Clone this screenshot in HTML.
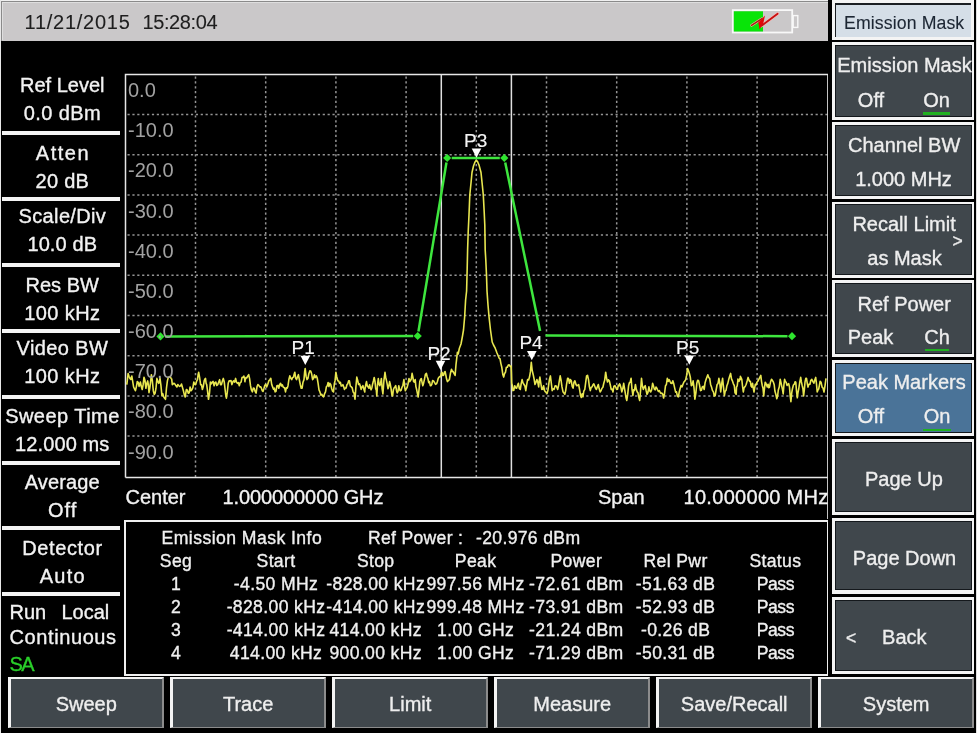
<!DOCTYPE html>
<html><head><meta charset="utf-8"><style>
html,body{margin:0;padding:0;}
html{background:#000;}
body{width:977px;height:733px;background:#000;position:relative;overflow:hidden;filter:blur(0.3px);font-family:"Liberation Sans", sans-serif;}
.t{position:absolute;white-space:pre;-webkit-text-stroke:0.35px currentColor;font-family:"Liberation Sans", sans-serif;}
</style></head><body>
<div style="position:absolute;left:0px;top:0px;width:977px;height:1px;background:#f0f0f0;"></div>
<div style="position:absolute;left:0px;top:0px;width:1px;height:733px;background:#e8e8e8;"></div>
<div style="position:absolute;left:1px;top:1px;width:827px;height:39.6px;background:#cac8c9;border-top:1px solid #8a8a8a;border-left:1px solid #8a8a8a;box-sizing:border-box;"></div>
<div style="position:absolute;left:2px;top:2px;width:826px;height:1px;background:#dedede;"></div>
<div style="position:absolute;left:2px;top:2px;width:1px;height:38px;background:#dedede;"></div>
<div class="t" style="left:24.50px;top:11.97px;font-size:20px;line-height:20px;color:#1e1e1e;letter-spacing:0.75px;-webkit-text-stroke:0.1px currentColor;">11/21/2015</div>
<div class="t" style="left:142.50px;top:11.97px;font-size:20px;line-height:20px;color:#1e1e1e;letter-spacing:-0.4px;-webkit-text-stroke:0.1px currentColor;">15:28:04</div>
<svg style="position:absolute;left:0;top:0" width="977" height="733" viewBox="0 0 977 733">
<rect x="732.8" y="10.1" width="59.4" height="22.4" fill="#cac8c9" stroke="#f8f8f8" stroke-width="1.8"/>
<rect x="733.8" y="11.3" width="29.2" height="20.2" fill="#08e408"/>
<rect x="793.2" y="15.6" width="4.6" height="11.8" fill="#cac8c9" stroke="#f8f8f8" stroke-width="1.4"/>
<path d="M751.5 25.3 L762 18.6" stroke="#e8b0a8" stroke-width="2.6" stroke-linecap="round"/>
<path d="M761.5 25.8 L777.6 13.8" stroke="#f4b8b8" stroke-width="3.2" stroke-linecap="round"/>
<path d="M751.5 25.3 L762 18.6" stroke="#a82010" stroke-width="1.4" stroke-linecap="round"/>
<polygon points="765,15.6 763.3,23.6 759.5,29.2 758.3,22.6" fill="#e00808"/>
<path d="M761.5 25.8 L777.6 13.8" stroke="#c81010" stroke-width="1.8" stroke-linecap="round"/>
</svg>
<div style="position:absolute;left:2px;top:130.8px;width:118.4px;height:3.9px;background:#f4f4f4;"></div>
<div style="position:absolute;left:2px;top:196.8px;width:118.4px;height:3.9px;background:#f4f4f4;"></div>
<div style="position:absolute;left:2px;top:262.8px;width:118.4px;height:3.9px;background:#f4f4f4;"></div>
<div style="position:absolute;left:2px;top:328.8px;width:118.4px;height:3.9px;background:#f4f4f4;"></div>
<div style="position:absolute;left:2px;top:394.8px;width:118.4px;height:3.9px;background:#f4f4f4;"></div>
<div style="position:absolute;left:2px;top:460.8px;width:118.4px;height:3.9px;background:#f4f4f4;"></div>
<div style="position:absolute;left:2px;top:526.0px;width:118.4px;height:3.9px;background:#f4f4f4;"></div>
<div style="position:absolute;left:2px;top:592.0px;width:118.4px;height:3.9px;background:#f4f4f4;"></div>
<div class="t" style="left:-87.80px;width:300px;text-align:center;top:75.07px;font-size:20px;line-height:20px;color:#f2f2f2;letter-spacing:0px;">Ref Level</div>
<div class="t" style="left:-87.60px;width:300px;text-align:center;top:103.27px;font-size:20px;line-height:20px;color:#f2f2f2;letter-spacing:0.4px;">0.0 dBm</div>
<div class="t" style="left:-87.05px;width:300px;text-align:center;top:143.17px;font-size:20px;line-height:20px;color:#f2f2f2;letter-spacing:1.5px;">Atten</div>
<div class="t" style="left:-87.65px;width:300px;text-align:center;top:171.47px;font-size:20px;line-height:20px;color:#f2f2f2;letter-spacing:0.3px;">20 dB</div>
<div class="t" style="left:-87.62px;width:300px;text-align:center;top:206.17px;font-size:20px;line-height:20px;color:#f2f2f2;letter-spacing:0.35px;">Scale/Div</div>
<div class="t" style="left:-87.75px;width:300px;text-align:center;top:234.47px;font-size:20px;line-height:20px;color:#f2f2f2;letter-spacing:0.1px;">10.0 dB</div>
<div class="t" style="left:-87.80px;width:300px;text-align:center;top:274.87px;font-size:20px;line-height:20px;color:#f2f2f2;letter-spacing:0px;">Res BW</div>
<div class="t" style="left:-87.60px;width:300px;text-align:center;top:302.87px;font-size:20px;line-height:20px;color:#f2f2f2;letter-spacing:0.4px;">100 kHz</div>
<div class="t" style="left:-87.60px;width:300px;text-align:center;top:337.87px;font-size:20px;line-height:20px;color:#f2f2f2;letter-spacing:0.4px;">Video BW</div>
<div class="t" style="left:-87.60px;width:300px;text-align:center;top:366.27px;font-size:20px;line-height:20px;color:#f2f2f2;letter-spacing:0.4px;">100 kHz</div>
<div class="t" style="left:-87.57px;width:300px;text-align:center;top:406.07px;font-size:20px;line-height:20px;color:#f2f2f2;letter-spacing:0.45px;">Sweep Time</div>
<div class="t" style="left:-87.75px;width:300px;text-align:center;top:433.67px;font-size:20px;line-height:20px;color:#f2f2f2;letter-spacing:0.1px;">12.000 ms</div>
<div class="t" style="left:-87.72px;width:300px;text-align:center;top:472.27px;font-size:20px;line-height:20px;color:#f2f2f2;letter-spacing:0.15px;">Average</div>
<div class="t" style="left:-87.30px;width:300px;text-align:center;top:499.87px;font-size:20px;line-height:20px;color:#f2f2f2;letter-spacing:1.0px;">Off</div>
<div class="t" style="left:-87.50px;width:300px;text-align:center;top:538.07px;font-size:20px;line-height:20px;color:#f2f2f2;letter-spacing:0.6px;">Detector</div>
<div class="t" style="left:-87.20px;width:300px;text-align:center;top:565.77px;font-size:20px;line-height:20px;color:#f2f2f2;letter-spacing:1.2px;">Auto</div>
<div class="t" style="left:9.50px;top:601.67px;font-size:20px;line-height:20px;color:#f2f2f2;">Run</div>
<div class="t" style="left:61.50px;top:601.67px;font-size:20px;line-height:20px;color:#f2f2f2;">Local</div>
<div class="t" style="left:9.50px;top:626.67px;font-size:20px;line-height:20px;color:#f2f2f2;letter-spacing:0.6px;">Continuous</div>
<div class="t" style="left:9.50px;top:653.87px;font-size:20px;line-height:20px;color:#2ad02a;letter-spacing:-1.5px;">SA</div>
<svg style="position:absolute;left:0;top:0" width="977" height="733" viewBox="0 0 977 733">
<line x1="195.50" y1="76.5" x2="195.50" y2="477.5" stroke="#949494" stroke-width="1.5" stroke-dasharray="2.2 2.66"/>
<line x1="265.70" y1="76.5" x2="265.70" y2="477.5" stroke="#949494" stroke-width="1.5" stroke-dasharray="2.2 2.66"/>
<line x1="335.90" y1="76.5" x2="335.90" y2="477.5" stroke="#949494" stroke-width="1.5" stroke-dasharray="2.2 2.66"/>
<line x1="406.10" y1="76.5" x2="406.10" y2="477.5" stroke="#949494" stroke-width="1.5" stroke-dasharray="2.2 2.66"/>
<line x1="476.30" y1="76.5" x2="476.30" y2="477.5" stroke="#949494" stroke-width="1.5" stroke-dasharray="2.2 2.66"/>
<line x1="546.50" y1="76.5" x2="546.50" y2="477.5" stroke="#949494" stroke-width="1.5" stroke-dasharray="2.2 2.66"/>
<line x1="616.70" y1="76.5" x2="616.70" y2="477.5" stroke="#949494" stroke-width="1.5" stroke-dasharray="2.2 2.66"/>
<line x1="686.90" y1="76.5" x2="686.90" y2="477.5" stroke="#949494" stroke-width="1.5" stroke-dasharray="2.2 2.66"/>
<line x1="757.10" y1="76.5" x2="757.10" y2="477.5" stroke="#949494" stroke-width="1.5" stroke-dasharray="2.2 2.66"/>
<line x1="127.5" y1="114.50" x2="827.9" y2="114.50" stroke="#949494" stroke-width="1.5" stroke-dasharray="2.2 2.68"/>
<line x1="127.5" y1="154.70" x2="827.9" y2="154.70" stroke="#949494" stroke-width="1.5" stroke-dasharray="2.2 2.68"/>
<line x1="127.5" y1="194.90" x2="827.9" y2="194.90" stroke="#949494" stroke-width="1.5" stroke-dasharray="2.2 2.68"/>
<line x1="127.5" y1="235.10" x2="827.9" y2="235.10" stroke="#949494" stroke-width="1.5" stroke-dasharray="2.2 2.68"/>
<line x1="127.5" y1="275.30" x2="827.9" y2="275.30" stroke="#949494" stroke-width="1.5" stroke-dasharray="2.2 2.68"/>
<line x1="127.5" y1="315.50" x2="827.9" y2="315.50" stroke="#949494" stroke-width="1.5" stroke-dasharray="2.2 2.68"/>
<line x1="127.5" y1="355.70" x2="827.9" y2="355.70" stroke="#949494" stroke-width="1.5" stroke-dasharray="2.2 2.68"/>
<line x1="127.5" y1="395.90" x2="827.9" y2="395.90" stroke="#949494" stroke-width="1.5" stroke-dasharray="2.2 2.68"/>
<line x1="127.5" y1="436.10" x2="827.9" y2="436.10" stroke="#949494" stroke-width="1.5" stroke-dasharray="2.2 2.68"/>
<path d="M125.5 477.5 L125.5 74.5 L827.9 74.5 L827.9 519" fill="none" stroke="#e6e6e6" stroke-width="1.5"/>
<line x1="125.5" y1="477.5" x2="827.9" y2="477.5" stroke="#e6e6e6" stroke-width="1.5"/>
<line x1="441.3" y1="74.5" x2="441.3" y2="477.5" stroke="#e0e0e0" stroke-width="1.5"/>
<line x1="511.4" y1="74.5" x2="511.4" y2="477.5" stroke="#e0e0e0" stroke-width="1.5"/>
<path d="M126.8 384.6 L127.5 378.8 L128.1 373.5 L129.0 376.3 L129.9 378.4 L130.8 379.4 L131.8 376.0 L132.7 381.3 L133.6 387.0 L134.5 388.9 L135.4 390.7 L136.4 386.6 L137.3 381.5 L138.2 382.3 L139.1 386.4 L139.7 384.3 L140.4 382.1 L141.3 386.5 L142.2 389.5 L143.1 384.9 L144.0 377.2 L145.0 380.6 L145.9 388.3 L146.8 383.5 L147.7 380.9 L148.3 384.6 L149.0 392.6 L149.8 388.2 L150.6 381.7 L151.4 374.7 L152.3 380.3 L153.3 390.7 L154.2 394.4 L155.1 393.2 L156.0 388.2 L156.9 378.4 L157.9 381.7 L158.8 383.3 L159.4 381.5 L160.0 378.4 L160.9 385.2 L161.9 395.6 L162.8 393.7 L163.7 396.9 L164.6 398.2 L165.5 399.3 L166.5 387.8 L167.4 380.9 L168.3 377.4 L169.2 377.2 L170.1 376.5 L171.1 378.4 L171.7 379.1 L172.3 384.6 L173.2 383.8 L174.1 383.3 L175.1 384.3 L176.0 385.8 L176.9 387.0 L177.8 384.6 L178.7 385.6 L179.7 386.4 L180.6 385.9 L181.5 384.0 L182.4 387.3 L183.4 390.7 L184.3 394.6 L185.2 396.9 L185.8 392.9 L186.4 389.5 L187.3 390.2 L188.3 393.2 L189.2 392.7 L190.1 387.0 L191.0 390.8 L192.0 389.5 L192.9 387.6 L193.8 382.1 L194.7 384.4 L195.6 384.6 L196.6 381.2 L197.5 379.7 L198.1 374.6 L198.7 372.3 L199.6 377.3 L200.6 384.6 L201.5 384.8 L202.4 389.5 L203.3 386.6 L204.2 380.9 L204.9 379.1 L205.5 378.4 L206.1 383.3 L206.7 384.6 L207.6 391.4 L208.5 399.3 L209.5 393.1 L210.4 382.1 L211.3 383.9 L212.2 382.1 L213.1 381.4 L214.1 385.8 L215.0 382.4 L215.9 382.1 L216.8 385.5 L217.8 384.6 L218.7 382.0 L219.6 379.7 L220.5 384.6 L221.4 384.6 L222.4 381.0 L223.3 378.4 L224.2 381.7 L225.1 389.5 L225.7 394.5 L226.4 398.1 L227.3 392.2 L228.2 383.3 L229.1 380.9 L230.0 380.9 L231.0 380.6 L231.9 384.6 L232.8 381.9 L233.7 380.9 L234.6 382.1 L235.6 378.4 L236.5 382.2 L237.4 383.3 L238.3 382.6 L239.3 385.8 L240.2 382.6 L241.1 382.1 L242.0 377.6 L242.9 377.2 L243.9 376.1 L244.8 379.7 L244.9 381.8 L245.0 380.8 L245.9 377.6 L246.8 378.0 L247.8 375.9 L248.7 374.7 L249.6 378.6 L250.5 385.7 L251.4 390.0 L252.4 391.9 L253.3 388.1 L254.2 388.2 L255.1 391.4 L256.1 393.1 L257.0 386.8 L257.9 384.5 L258.8 385.3 L259.7 386.9 L260.6 386.7 L261.4 388.2 L262.2 390.6 L263.0 391.4 L263.8 388.9 L264.7 385.7 L265.7 384.3 L266.7 386.9 L267.7 384.5 L268.8 380.9 L269.8 379.8 L270.8 378.3 L271.7 384.5 L272.6 386.9 L273.5 389.3 L274.3 388.1 L275.1 391.9 L276.0 391.3 L276.9 385.7 L277.9 385.4 L278.8 388.2 L279.7 384.5 L280.6 383.3 L281.4 385.9 L282.3 384.8 L283.1 386.9 L283.9 387.5 L284.7 388.0 L285.5 391.9 L286.4 387.7 L287.2 388.2 L288.0 385.7 L288.9 379.5 L289.8 375.9 L290.8 378.3 L291.7 379.6 L292.6 377.7 L293.5 377.1 L294.1 374.4 L294.8 372.2 L295.7 378.3 L296.6 379.6 L297.5 377.0 L298.4 374.7 L299.4 380.0 L300.3 384.5 L301.2 388.2 L302.1 388.2 L303.0 382.2 L304.0 379.6 L304.6 372.2 L305.2 368.5 L306.1 376.2 L307.0 379.6 L308.0 378.2 L308.9 373.4 L309.8 370.9 L310.7 371.0 L311.6 373.7 L312.6 379.6 L313.5 378.4 L314.4 374.7 L315.3 377.6 L316.3 375.9 L317.2 378.0 L318.1 383.3 L319.0 389.9 L319.9 391.9 L320.9 395.1 L321.8 394.3 L322.7 396.1 L323.6 396.8 L324.5 393.9 L325.5 391.9 L326.4 386.7 L327.3 385.7 L328.1 382.5 L328.9 386.5 L329.8 383.3 L330.7 384.4 L331.6 388.2 L332.5 391.1 L333.5 391.9 L334.3 384.0 L335.1 380.4 L335.9 372.2 L336.8 377.0 L337.8 380.8 L338.7 381.0 L339.6 383.3 L340.4 382.4 L341.2 386.0 L342.1 385.7 L342.9 384.7 L343.7 386.8 L344.5 389.4 L345.3 388.1 L346.1 388.0 L347.0 384.5 L347.8 383.8 L348.6 380.9 L349.4 380.8 L350.3 386.0 L351.3 386.9 L352.2 387.9 L353.1 391.9 L354.0 393.0 L355.0 399.2 L355.9 387.0 L356.8 377.1 L357.7 380.5 L358.6 384.5 L359.5 383.8 L360.3 386.1 L361.1 389.4 L362.0 386.9 L362.9 385.7 L363.9 389.2 L364.8 391.9 L364.9 388.4 L365.0 388.8 L365.8 384.5 L366.5 381.6 L367.3 386.2 L368.1 386.7 L368.8 388.2 L369.6 384.7 L370.4 388.1 L371.1 389.8 L371.9 387.7 L372.7 383.7 L373.4 381.0 L374.2 377.5 L375.0 381.3 L375.7 388.8 L376.3 389.9 L376.8 395.9 L377.5 384.7 L378.3 378.5 L379.1 384.3 L379.8 385.7 L380.6 383.2 L381.4 378.5 L382.1 388.6 L382.9 393.9 L383.9 380.7 L385.0 372.4 L385.7 377.2 L386.5 380.6 L387.3 384.6 L388.0 388.8 L388.8 386.4 L389.6 381.6 L390.3 384.3 L391.1 388.8 L391.9 395.0 L392.6 395.9 L393.4 389.6 L394.2 387.8 L394.9 387.0 L395.7 385.7 L396.5 390.5 L397.2 392.9 L398.0 391.4 L398.8 385.7 L399.5 389.5 L400.3 390.8 L401.1 390.3 L401.8 387.8 L402.9 385.2 L403.9 379.6 L404.7 387.4 L405.4 390.8 L406.2 388.5 L407.0 387.8 L408.0 384.1 L409.0 378.5 L409.8 381.6 L410.5 380.6 L411.3 378.9 L412.1 373.4 L412.9 377.1 L413.6 381.6 L414.4 382.1 L415.2 379.6 L415.9 386.6 L416.7 389.8 L417.5 393.8 L418.2 397.0 L419.0 389.9 L419.8 381.6 L420.5 379.5 L421.3 378.5 L422.1 382.6 L422.8 385.7 L423.6 383.2 L424.4 379.6 L425.4 374.3 L426.4 373.4 L427.2 376.7 L427.9 378.5 L428.7 382.6 L429.5 381.6 L430.3 385.6 L431.0 385.7 L431.8 384.3 L432.6 380.6 L433.6 381.0 L434.6 382.6 L435.6 384.4 L436.6 383.7 L437.4 381.5 L438.2 378.5 L439.0 377.2 L439.7 376.5 L440.5 376.7 L441.3 373.4 L442.0 372.3 L442.8 375.5 L443.6 375.2 L444.3 372.4 L445.1 371.5 L445.9 375.5 L446.6 379.1 L447.4 381.6 L448.4 380.5 L449.4 379.6 L450.5 373.0 L451.5 369.3 L452.3 371.4 L453.0 371.4 L454.0 373.4 L455.1 375.5 L456.0 364.6 L457.4 352.3 L458.2 354.0 L459.4 348.2 L461.0 344.0 L462.5 336.0 L463.5 330.0 L464.6 317.5 L465.6 300.0 L466.6 291.0 L467.2 268.0 L467.6 250.0 L468.2 232.0 L469.0 215.0 L469.8 195.0 L471.0 183.0 L472.0 172.5 L473.5 166.0 L475.0 162.0 L476.2 160.5 L477.5 161.5 L479.0 165.0 L481.0 172.5 L482.3 185.0 L483.3 195.0 L484.2 212.0 L484.8 225.0 L485.2 250.0 L485.8 260.0 L486.5 275.0 L487.0 291.0 L488.0 305.0 L489.1 317.5 L490.5 330.0 L492.2 342.0 L493.5 345.0 L495.2 348.2 L497.0 353.0 L499.3 358.5 L500.0 358.7 L500.9 363.6 L501.8 367.3 L502.8 374.4 L503.7 377.1 L504.6 373.4 L505.5 372.2 L506.4 367.2 L507.4 367.3 L508.3 365.0 L509.2 364.8 L510.1 366.4 L511.1 366.1 L511.4 373.1 L511.7 383.3 L512.3 385.2 L512.9 390.6 L513.8 390.3 L514.7 385.7 L515.7 387.8 L516.6 388.2 L517.5 385.4 L518.4 383.3 L519.3 388.4 L520.3 389.4 L521.2 383.6 L522.1 379.6 L523.0 382.9 L524.0 384.5 L524.9 386.0 L525.8 390.6 L526.7 384.7 L527.6 379.6 L528.6 379.9 L529.5 377.1 L530.4 371.9 L531.3 362.4 L532.2 370.5 L533.2 374.7 L534.1 379.0 L535.0 384.5 L535.9 382.5 L536.9 379.6 L537.8 382.3 L538.7 386.9 L539.3 380.1 L539.9 377.1 L540.8 383.2 L541.8 389.4 L542.7 389.3 L543.6 385.7 L544.5 390.6 L545.5 391.9 L546.3 392.5 L547.1 393.4 L547.9 390.6 L548.7 384.6 L549.5 379.1 L550.4 375.9 L551.3 383.0 L552.2 390.6 L553.1 388.8 L554.1 389.4 L555.0 386.1 L555.9 385.7 L556.8 387.1 L557.7 389.4 L558.6 385.5 L559.4 380.4 L560.2 375.9 L561.1 380.5 L562.0 386.9 L563.0 391.8 L563.9 393.1 L564.8 394.4 L565.7 390.6 L566.6 384.2 L567.6 378.3 L568.5 378.6 L569.4 383.3 L570.3 379.6 L571.3 380.8 L572.2 386.4 L573.1 388.2 L574.0 382.1 L574.9 380.8 L575.9 384.3 L576.8 385.7 L577.7 385.5 L578.6 384.5 L579.5 389.0 L580.5 395.5 L581.3 397.5 L582.1 393.9 L582.9 396.8 L583.8 391.2 L584.8 389.4 L585.7 382.4 L586.6 375.9 L587.5 375.3 L588.5 379.6 L589.4 386.8 L590.3 390.6 L591.2 387.4 L592.1 386.9 L593.0 384.7 L593.8 383.8 L594.6 385.7 L595.5 388.2 L596.4 389.4 L597.4 386.7 L598.3 384.5 L599.2 388.8 L600.1 391.9 L601.0 390.8 L602.0 388.2 L602.9 387.3 L603.8 383.3 L604.7 380.1 L605.7 372.2 L606.6 378.1 L607.5 382.0 L608.4 379.8 L609.3 380.8 L610.3 385.0 L611.2 389.4 L612.1 389.0 L613.0 391.9 L613.9 386.2 L614.9 385.7 L615.8 387.4 L616.7 389.4 L617.5 389.3 L618.3 385.3 L619.2 385.7 L619.6 383.9 L620.0 384.5 L620.9 387.4 L621.8 391.9 L622.8 388.6 L623.7 383.3 L624.6 388.9 L625.5 394.3 L626.1 398.0 L626.8 400.5 L627.7 394.4 L628.6 385.7 L629.4 382.7 L630.2 382.3 L631.1 378.3 L632.0 389.1 L632.9 395.5 L633.7 389.7 L634.5 390.4 L635.4 384.5 L636.3 389.3 L637.2 391.9 L638.0 392.8 L638.8 397.3 L639.7 400.5 L640.6 390.1 L641.5 378.3 L642.4 386.0 L643.3 389.4 L644.3 386.9 L645.2 385.7 L646.1 390.4 L647.0 394.3 L647.9 392.6 L648.9 386.9 L649.8 390.9 L650.7 391.9 L651.6 389.9 L652.6 383.3 L653.5 386.1 L654.4 389.4 L655.2 389.8 L656.0 387.0 L656.9 388.2 L657.7 390.1 L658.5 391.5 L659.3 390.6 L660.1 392.2 L661.0 393.4 L661.8 393.1 L662.7 394.0 L663.6 398.0 L664.5 393.9 L665.5 385.7 L666.4 384.5 L667.3 378.3 L668.2 381.4 L669.1 379.6 L670.1 381.6 L671.0 383.3 L671.9 383.5 L672.8 380.8 L673.7 383.6 L674.7 388.2 L675.6 392.1 L676.5 391.9 L677.4 396.2 L678.4 396.8 L679.3 391.7 L680.2 388.2 L681.1 385.4 L682.0 386.9 L683.0 384.2 L683.9 382.0 L684.8 381.1 L685.7 379.6 L686.6 375.4 L687.6 368.5 L688.5 370.9 L689.4 373.4 L690.3 377.1 L691.3 385.7 L692.2 384.9 L693.1 380.8 L694.0 387.7 L694.9 399.2 L695.9 392.8 L696.8 383.3 L697.7 380.3 L698.6 380.8 L699.5 384.9 L700.5 390.6 L701.4 390.3 L702.3 386.9 L703.2 386.3 L704.2 389.4 L705.1 382.7 L706.0 379.6 L706.9 377.2 L707.8 374.7 L708.8 377.7 L709.7 378.3 L710.6 384.4 L711.5 386.9 L712.4 390.4 L713.4 391.9 L714.3 396.0 L715.2 395.5 L716.1 390.0 L717.1 384.5 L718.0 383.7 L718.9 378.3 L719.8 382.9 L720.7 391.9 L721.7 383.6 L722.6 378.3 L723.5 387.1 L724.4 395.5 L725.2 391.2 L726.1 390.2 L726.9 385.7 L727.8 383.4 L728.7 379.6 L729.6 376.6 L730.6 373.4 L731.5 378.9 L732.4 380.8 L733.3 383.6 L734.3 385.7 L734.6 388.3 L735.0 392.9 L735.5 393.0 L736.1 394.3 L736.3 392.5 L736.5 387.1 L737.2 385.8 L737.9 380.3 L737.9 379.0 L737.9 380.8 L739.0 381.4 L740.0 378.3 L740.2 379.8 L740.4 376.4 L741.1 378.0 L741.8 379.3 L742.5 386.0 L743.3 392.0 L744.0 388.0 L744.7 387.1 L745.5 385.8 L746.2 384.2 L747.2 380.8 L748.1 377.4 L748.9 379.9 L749.6 381.3 L750.3 381.2 L751.1 386.1 L751.8 387.1 L752.5 383.2 L753.2 387.7 L754.0 392.0 L754.7 387.6 L755.4 384.2 L756.2 384.8 L756.9 382.2 L757.9 381.1 L758.8 379.3 L759.8 377.3 L760.8 375.4 L761.5 381.3 L762.2 385.2 L763.0 388.2 L763.7 395.9 L764.4 389.2 L765.2 382.2 L765.9 383.2 L766.6 385.2 L767.3 387.0 L768.1 384.2 L768.8 387.8 L769.5 387.1 L770.5 382.0 L771.5 379.3 L772.5 380.6 L773.4 382.2 L774.2 384.7 L774.9 391.0 L775.9 394.5 L776.8 398.8 L777.6 396.0 L778.3 390.0 L779.3 386.8 L780.2 379.3 L781.0 382.6 L781.7 386.1 L782.4 389.1 L783.2 393.9 L783.9 385.0 L784.6 379.3 L785.3 381.4 L786.1 382.2 L787.0 385.4 L788.0 384.2 L788.7 383.7 L789.5 387.1 L790.2 395.8 L790.9 401.7 L791.7 392.9 L792.4 389.0 L793.4 385.0 L794.3 384.2 L795.1 381.8 L795.8 382.2 L796.5 391.0 L797.3 397.8 L798.0 392.5 L798.7 389.0 L799.7 382.5 L800.7 377.4 L801.4 381.9 L802.1 385.2 L802.9 388.5 L803.6 395.9 L804.3 390.2 L805.0 382.2 L805.8 378.3 L806.5 378.3 L807.2 382.8 L808.0 387.1 L808.9 384.3 L809.9 384.2 L810.9 380.2 L811.8 379.3 L812.8 381.4 L813.8 383.2 L814.8 380.0 L815.7 377.4 L816.5 384.0 L817.2 392.0 L817.9 390.1 L818.7 389.0 L819.4 385.3 L820.1 381.3 L821.1 382.4 L822.1 387.1 L823.0 388.0 L824.0 392.0 L825.0 385.8 L826.0 378.3" fill="none" stroke="#e8e650" stroke-width="1.6" stroke-linejoin="round"/>
<line x1="165.00" y1="336.39" x2="413.20" y2="336.01" stroke="#3ee63e" stroke-width="2.5"/>
<line x1="418.44" y1="331.56" x2="446.46" y2="162.44" stroke="#3ee63e" stroke-width="2.5"/>
<line x1="451.70" y1="158.00" x2="499.80" y2="158.00" stroke="#3ee63e" stroke-width="2.5"/>
<line x1="505.21" y1="162.41" x2="540.09" y2="331.09" stroke="#3ee63e" stroke-width="2.5"/>
<line x1="545.50" y1="335.51" x2="787.50" y2="336.19" stroke="#3ee63e" stroke-width="2.5"/>
<polygon points="156.4,336.4 160.5,332.29999999999995 164.6,336.4 160.5,340.5" fill="#2ee52e"/>
<polygon points="413.59999999999997,336 417.7,331.9 421.8,336 417.7,340.1" fill="#2ee52e"/>
<polygon points="443.09999999999997,158 447.2,153.9 451.3,158 447.2,162.1" fill="#2ee52e"/>
<polygon points="500.2,158 504.3,153.9 508.40000000000003,158 504.3,162.1" fill="#2ee52e"/>
<polygon points="787.9,336.2 792,332.09999999999997 796.1,336.2 792,340.3" fill="#2ee52e"/>
<polygon points="300.5,355.7 310.1,355.7 305.3,365" fill="#ffffff"/>
<polygon points="435.7,360.7 445.3,360.7 440.5,370" fill="#ffffff"/>
<polygon points="527.0,351.0 536.5999999999999,351.0 531.8,360.3" fill="#ffffff"/>
<polygon points="471.7,148.5 481.3,148.5 476.5,157.8" fill="#ffffff"/>
<polygon points="684.5,355.5 694.0999999999999,355.5 689.3,364.8" fill="#ffffff"/>
</svg>
<div class="t" style="left:128.00px;top:80.07px;font-size:20px;line-height:20px;color:#a2a2a2;-webkit-text-stroke:0;">0.0</div>
<div class="t" style="left:128.00px;top:120.24px;font-size:20px;line-height:20px;color:#a2a2a2;-webkit-text-stroke:0;">-10.0</div>
<div class="t" style="left:128.00px;top:160.41px;font-size:20px;line-height:20px;color:#a2a2a2;-webkit-text-stroke:0;">-20.0</div>
<div class="t" style="left:128.00px;top:200.58px;font-size:20px;line-height:20px;color:#a2a2a2;-webkit-text-stroke:0;">-30.0</div>
<div class="t" style="left:128.00px;top:240.75px;font-size:20px;line-height:20px;color:#a2a2a2;-webkit-text-stroke:0;">-40.0</div>
<div class="t" style="left:128.00px;top:280.92px;font-size:20px;line-height:20px;color:#a2a2a2;-webkit-text-stroke:0;">-50.0</div>
<div class="t" style="left:128.00px;top:321.09px;font-size:20px;line-height:20px;color:#a2a2a2;-webkit-text-stroke:0;">-60.0</div>
<div class="t" style="left:128.00px;top:361.26px;font-size:20px;line-height:20px;color:#a2a2a2;-webkit-text-stroke:0;">-70.0</div>
<div class="t" style="left:128.00px;top:401.43px;font-size:20px;line-height:20px;color:#a2a2a2;-webkit-text-stroke:0;">-80.0</div>
<div class="t" style="left:128.00px;top:441.60px;font-size:20px;line-height:20px;color:#a2a2a2;-webkit-text-stroke:0;">-90.0</div>
<div class="t" style="left:153.20px;width:300px;text-align:center;top:337.52px;font-size:19px;line-height:19px;color:#f4f4f4;-webkit-text-stroke:0.15px currentColor;">P1</div>
<div class="t" style="left:289.00px;width:300px;text-align:center;top:344.32px;font-size:19px;line-height:19px;color:#f4f4f4;-webkit-text-stroke:0.15px currentColor;">P2</div>
<div class="t" style="left:325.70px;width:300px;text-align:center;top:130.72px;font-size:19px;line-height:19px;color:#f4f4f4;-webkit-text-stroke:0.15px currentColor;">P3</div>
<div class="t" style="left:381.00px;width:300px;text-align:center;top:333.12px;font-size:19px;line-height:19px;color:#f4f4f4;-webkit-text-stroke:0.15px currentColor;">P4</div>
<div class="t" style="left:537.70px;width:300px;text-align:center;top:338.02px;font-size:19px;line-height:19px;color:#f4f4f4;-webkit-text-stroke:0.15px currentColor;">P5</div>
<div class="t" style="left:125.50px;top:487.07px;font-size:20px;line-height:20px;color:#f2f2f2;">Center</div>
<div class="t" style="left:222.50px;top:487.07px;font-size:20px;line-height:20px;color:#f2f2f2;letter-spacing:-0.1px;">1.000000000 GHz</div>
<div class="t" style="left:598.00px;top:487.07px;font-size:20px;line-height:20px;color:#f2f2f2;">Span</div>
<div class="t" style="left:683.50px;top:487.07px;font-size:20px;line-height:20px;color:#f2f2f2;letter-spacing:0.3px;">10.000000 MHz</div>
<div style="position:absolute;left:123.8px;top:520px;width:704.8px;height:156px;background:transparent;border:2.6px solid #f0f0f0;box-sizing:border-box;"></div>
<div class="t" style="left:161.50px;top:530.10px;font-size:17.6px;line-height:17.6px;color:#f0f0f0;letter-spacing:0.45px;">Emission Mask Info</div>
<div class="t" style="left:368.00px;top:530.10px;font-size:17.6px;line-height:17.6px;color:#f0f0f0;letter-spacing:0.3px;">Ref Power :</div>
<div class="t" style="left:476.00px;top:530.10px;font-size:17.6px;line-height:17.6px;color:#f0f0f0;letter-spacing:0.33px;">-20.976 dBm</div>
<div class="t" style="left:26.00px;width:300px;text-align:center;top:553.30px;font-size:17.6px;line-height:17.6px;color:#f0f0f0;letter-spacing:0.35px;">Seg</div>
<div class="t" style="left:126.00px;width:300px;text-align:center;top:553.30px;font-size:17.6px;line-height:17.6px;color:#f0f0f0;letter-spacing:0.35px;">Start</div>
<div class="t" style="left:225.70px;width:300px;text-align:center;top:553.30px;font-size:17.6px;line-height:17.6px;color:#f0f0f0;letter-spacing:0.35px;">Stop</div>
<div class="t" style="left:325.60px;width:300px;text-align:center;top:553.30px;font-size:17.6px;line-height:17.6px;color:#f0f0f0;letter-spacing:0.35px;">Peak</div>
<div class="t" style="left:426.30px;width:300px;text-align:center;top:553.30px;font-size:17.6px;line-height:17.6px;color:#f0f0f0;letter-spacing:0.35px;">Power</div>
<div class="t" style="left:525.60px;width:300px;text-align:center;top:553.30px;font-size:17.6px;line-height:17.6px;color:#f0f0f0;letter-spacing:0.35px;">Rel Pwr</div>
<div class="t" style="left:625.40px;width:300px;text-align:center;top:553.30px;font-size:17.6px;line-height:17.6px;color:#f0f0f0;letter-spacing:0.35px;">Status</div>
<div class="t" style="left:26.00px;width:300px;text-align:center;top:576.20px;font-size:17.6px;line-height:17.6px;color:#f0f0f0;letter-spacing:0.35px;">1</div>
<div class="t" style="left:126.00px;width:300px;text-align:center;top:576.20px;font-size:17.6px;line-height:17.6px;color:#f0f0f0;letter-spacing:0.35px;">-4.50 MHz</div>
<div class="t" style="left:225.70px;width:300px;text-align:center;top:576.20px;font-size:17.6px;line-height:17.6px;color:#f0f0f0;letter-spacing:0.35px;">-828.00 kHz</div>
<div class="t" style="left:325.60px;width:300px;text-align:center;top:576.20px;font-size:17.6px;line-height:17.6px;color:#f0f0f0;letter-spacing:0.35px;">997.56 MHz</div>
<div class="t" style="left:426.30px;width:300px;text-align:center;top:576.20px;font-size:17.6px;line-height:17.6px;color:#f0f0f0;letter-spacing:0.35px;">-72.61 dBm</div>
<div class="t" style="left:525.60px;width:300px;text-align:center;top:576.20px;font-size:17.6px;line-height:17.6px;color:#f0f0f0;letter-spacing:0.35px;">-51.63 dB</div>
<div class="t" style="left:625.40px;width:300px;text-align:center;top:576.20px;font-size:17.6px;line-height:17.6px;color:#f0f0f0;letter-spacing:-0.45px;">Pass</div>
<div class="t" style="left:26.00px;width:300px;text-align:center;top:599.10px;font-size:17.6px;line-height:17.6px;color:#f0f0f0;letter-spacing:0.35px;">2</div>
<div class="t" style="left:126.00px;width:300px;text-align:center;top:599.10px;font-size:17.6px;line-height:17.6px;color:#f0f0f0;letter-spacing:0.35px;">-828.00 kHz</div>
<div class="t" style="left:225.70px;width:300px;text-align:center;top:599.10px;font-size:17.6px;line-height:17.6px;color:#f0f0f0;letter-spacing:0.35px;">-414.00 kHz</div>
<div class="t" style="left:325.60px;width:300px;text-align:center;top:599.10px;font-size:17.6px;line-height:17.6px;color:#f0f0f0;letter-spacing:0.35px;">999.48 MHz</div>
<div class="t" style="left:426.30px;width:300px;text-align:center;top:599.10px;font-size:17.6px;line-height:17.6px;color:#f0f0f0;letter-spacing:0.35px;">-73.91 dBm</div>
<div class="t" style="left:525.60px;width:300px;text-align:center;top:599.10px;font-size:17.6px;line-height:17.6px;color:#f0f0f0;letter-spacing:0.35px;">-52.93 dB</div>
<div class="t" style="left:625.40px;width:300px;text-align:center;top:599.10px;font-size:17.6px;line-height:17.6px;color:#f0f0f0;letter-spacing:-0.45px;">Pass</div>
<div class="t" style="left:26.00px;width:300px;text-align:center;top:622.00px;font-size:17.6px;line-height:17.6px;color:#f0f0f0;letter-spacing:0.35px;">3</div>
<div class="t" style="left:126.00px;width:300px;text-align:center;top:622.00px;font-size:17.6px;line-height:17.6px;color:#f0f0f0;letter-spacing:0.35px;">-414.00 kHz</div>
<div class="t" style="left:225.70px;width:300px;text-align:center;top:622.00px;font-size:17.6px;line-height:17.6px;color:#f0f0f0;letter-spacing:0.35px;">414.00 kHz</div>
<div class="t" style="left:325.60px;width:300px;text-align:center;top:622.00px;font-size:17.6px;line-height:17.6px;color:#f0f0f0;letter-spacing:0.35px;">1.00 GHz</div>
<div class="t" style="left:426.30px;width:300px;text-align:center;top:622.00px;font-size:17.6px;line-height:17.6px;color:#f0f0f0;letter-spacing:0.35px;">-21.24 dBm</div>
<div class="t" style="left:525.60px;width:300px;text-align:center;top:622.00px;font-size:17.6px;line-height:17.6px;color:#f0f0f0;letter-spacing:0.35px;">-0.26 dB</div>
<div class="t" style="left:625.40px;width:300px;text-align:center;top:622.00px;font-size:17.6px;line-height:17.6px;color:#f0f0f0;letter-spacing:-0.45px;">Pass</div>
<div class="t" style="left:26.00px;width:300px;text-align:center;top:644.90px;font-size:17.6px;line-height:17.6px;color:#f0f0f0;letter-spacing:0.35px;">4</div>
<div class="t" style="left:126.00px;width:300px;text-align:center;top:644.90px;font-size:17.6px;line-height:17.6px;color:#f0f0f0;letter-spacing:0.35px;">414.00 kHz</div>
<div class="t" style="left:225.70px;width:300px;text-align:center;top:644.90px;font-size:17.6px;line-height:17.6px;color:#f0f0f0;letter-spacing:0.35px;">900.00 kHz</div>
<div class="t" style="left:325.60px;width:300px;text-align:center;top:644.90px;font-size:17.6px;line-height:17.6px;color:#f0f0f0;letter-spacing:0.35px;">1.00 GHz</div>
<div class="t" style="left:426.30px;width:300px;text-align:center;top:644.90px;font-size:17.6px;line-height:17.6px;color:#f0f0f0;letter-spacing:0.35px;">-71.29 dBm</div>
<div class="t" style="left:525.60px;width:300px;text-align:center;top:644.90px;font-size:17.6px;line-height:17.6px;color:#f0f0f0;letter-spacing:0.35px;">-50.31 dB</div>
<div class="t" style="left:625.40px;width:300px;text-align:center;top:644.90px;font-size:17.6px;line-height:17.6px;color:#f0f0f0;letter-spacing:-0.45px;">Pass</div>
<div style="position:absolute;left:828px;top:0px;width:149px;height:733px;background:#000;"></div>
<div style="position:absolute;left:832px;top:0px;width:142px;height:39.5px;background:#f4f4f4;"></div>
<div style="position:absolute;left:835.3px;top:3.3px;width:136.1px;height:34px;background:#d5dee7;border-top:2px solid #1a1e22;border-left:1.5px solid #1a1e22;box-sizing:border-box;"></div>
<div class="t" style="left:754.20px;width:300px;text-align:center;top:14.82px;font-size:17.7px;line-height:17.7px;color:#1c2633;letter-spacing:0.1px;-webkit-text-stroke:0.1px currentColor;">Emission Mask</div>
<div style="position:absolute;left:832px;top:41.8px;width:142.2px;height:77.9px;background:#f4f4f4;"></div>
<div style="position:absolute;left:835.3px;top:44.599999999999994px;width:136.4px;height:72.10000000000001px;background:#40474c;border:1.8px solid #14181c;border-right-width:1.3px;border-bottom-width:1.4px;box-sizing:border-box;"></div>
<div style="position:absolute;left:832px;top:121.7px;width:142.2px;height:77.7px;background:#f4f4f4;"></div>
<div style="position:absolute;left:835.3px;top:124.5px;width:136.4px;height:71.9px;background:#40474c;border:1.8px solid #14181c;border-right-width:1.3px;border-bottom-width:1.4px;box-sizing:border-box;"></div>
<div style="position:absolute;left:832px;top:201.5px;width:142.2px;height:76.5px;background:#f4f4f4;"></div>
<div style="position:absolute;left:835.3px;top:204.3px;width:136.4px;height:70.7px;background:#40474c;border:1.8px solid #14181c;border-right-width:1.3px;border-bottom-width:1.4px;box-sizing:border-box;"></div>
<div style="position:absolute;left:832px;top:279.8px;width:142.2px;height:77.19999999999999px;background:#f4f4f4;"></div>
<div style="position:absolute;left:835.3px;top:282.6px;width:136.4px;height:71.39999999999999px;background:#40474c;border:1.8px solid #14181c;border-right-width:1.3px;border-bottom-width:1.4px;box-sizing:border-box;"></div>
<div style="position:absolute;left:832px;top:359.7px;width:142.2px;height:76.30000000000001px;background:#f4f4f4;"></div>
<div style="position:absolute;left:835.3px;top:362.5px;width:136.4px;height:70.50000000000001px;background:#4a7398;border:1.8px solid #14181c;border-right-width:1.3px;border-bottom-width:1.4px;box-sizing:border-box;"></div>
<div style="position:absolute;left:832px;top:439.3px;width:142.2px;height:75.30000000000001px;background:#f4f4f4;"></div>
<div style="position:absolute;left:835.3px;top:442.1px;width:136.4px;height:69.50000000000001px;background:#40474c;border:1.8px solid #14181c;border-right-width:1.3px;border-bottom-width:1.4px;box-sizing:border-box;"></div>
<div style="position:absolute;left:832px;top:518px;width:142.2px;height:75.5px;background:#f4f4f4;"></div>
<div style="position:absolute;left:835.3px;top:520.8px;width:136.4px;height:69.7px;background:#40474c;border:1.8px solid #14181c;border-right-width:1.3px;border-bottom-width:1.4px;box-sizing:border-box;"></div>
<div style="position:absolute;left:832px;top:596.7px;width:142.2px;height:77.29999999999995px;background:#f4f4f4;"></div>
<div style="position:absolute;left:835.3px;top:599.5px;width:136.4px;height:71.49999999999996px;background:#40474c;border:1.8px solid #14181c;border-right-width:1.3px;border-bottom-width:1.4px;box-sizing:border-box;"></div>
<div class="t" style="left:754.50px;width:300px;text-align:center;top:55.37px;font-size:20px;line-height:20px;color:#eeeeee;">Emission Mask</div>
<div class="t" style="left:721.00px;width:300px;text-align:center;top:89.77px;font-size:20px;line-height:20px;color:#eeeeee;">Off</div>
<div class="t" style="left:786.60px;width:300px;text-align:center;top:89.77px;font-size:20px;line-height:20px;color:#eeeeee;">On</div>
<div style="position:absolute;left:923.3px;top:112px;width:27.1px;height:2.5px;background:#20b020;"></div>
<div class="t" style="left:754.20px;width:300px;text-align:center;top:134.77px;font-size:20px;line-height:20px;color:#eeeeee;">Channel BW</div>
<div class="t" style="left:753.50px;width:300px;text-align:center;top:169.27px;font-size:20px;line-height:20px;color:#eeeeee;">1.000 MHz</div>
<div class="t" style="left:754.10px;width:300px;text-align:center;top:214.17px;font-size:20px;line-height:20px;color:#eeeeee;">Recall Limit</div>
<div class="t" style="left:754.50px;width:300px;text-align:center;top:248.07px;font-size:20px;line-height:20px;color:#eeeeee;">as Mask</div>
<div class="t" style="left:807.50px;width:300px;text-align:center;top:233.39px;font-size:17.5px;line-height:17.5px;color:#eeeeee;">&gt;</div>
<div class="t" style="left:754.20px;width:300px;text-align:center;top:293.57px;font-size:20px;line-height:20px;color:#eeeeee;">Ref Power</div>
<div class="t" style="left:720.50px;width:300px;text-align:center;top:326.77px;font-size:20px;line-height:20px;color:#eeeeee;">Peak</div>
<div class="t" style="left:787.00px;width:300px;text-align:center;top:326.77px;font-size:20px;line-height:20px;color:#eeeeee;">Ch</div>
<div style="position:absolute;left:924.5px;top:348.6px;width:24.5px;height:2.5px;background:#20b020;"></div>
<div class="t" style="left:754.00px;width:300px;text-align:center;top:372.07px;font-size:20px;line-height:20px;color:#eeeeee;">Peak Markers</div>
<div class="t" style="left:721.00px;width:300px;text-align:center;top:405.87px;font-size:20px;line-height:20px;color:#eeeeee;">Off</div>
<div class="t" style="left:787.00px;width:300px;text-align:center;top:405.87px;font-size:20px;line-height:20px;color:#eeeeee;">On</div>
<div style="position:absolute;left:923px;top:428.5px;width:28px;height:2.5px;background:#20b020;"></div>
<div class="t" style="left:753.90px;width:300px;text-align:center;top:469.37px;font-size:20px;line-height:20px;color:#eeeeee;">Page Up</div>
<div class="t" style="left:754.50px;width:300px;text-align:center;top:548.27px;font-size:20px;line-height:20px;color:#eeeeee;">Page Down</div>
<div class="t" style="left:701.00px;width:300px;text-align:center;top:630.19px;font-size:17.5px;line-height:17.5px;color:#eeeeee;">&lt;</div>
<div class="t" style="left:754.30px;width:300px;text-align:center;top:626.77px;font-size:20px;line-height:20px;color:#eeeeee;">Back</div>
<div style="position:absolute;left:976px;top:0px;width:1px;height:733px;background:#e0e0e0;"></div>
<div style="position:absolute;left:8.2px;top:677.3px;width:156px;height:51.2px;background:#40474c;border-left:3px solid #f4f4f4;border-top:2.7px solid #f4f4f4;border-right:2px solid #8c8c8c;border-bottom:1.7px solid #8c8c8c;box-sizing:border-box;"></div>
<div class="t" style="left:-63.80px;width:300px;text-align:center;top:693.57px;font-size:20px;line-height:20px;color:#eeeeee;">Sweep</div>
<div style="position:absolute;left:170.2px;top:677.3px;width:156px;height:51.2px;background:#40474c;border-left:3px solid #f4f4f4;border-top:2.7px solid #f4f4f4;border-right:2px solid #8c8c8c;border-bottom:1.7px solid #8c8c8c;box-sizing:border-box;"></div>
<div class="t" style="left:98.20px;width:300px;text-align:center;top:693.57px;font-size:20px;line-height:20px;color:#eeeeee;">Trace</div>
<div style="position:absolute;left:332.2px;top:677.3px;width:156px;height:51.2px;background:#40474c;border-left:3px solid #f4f4f4;border-top:2.7px solid #f4f4f4;border-right:2px solid #8c8c8c;border-bottom:1.7px solid #8c8c8c;box-sizing:border-box;"></div>
<div class="t" style="left:260.20px;width:300px;text-align:center;top:693.57px;font-size:20px;line-height:20px;color:#eeeeee;">Limit</div>
<div style="position:absolute;left:494.2px;top:677.3px;width:156px;height:51.2px;background:#40474c;border-left:3px solid #f4f4f4;border-top:2.7px solid #f4f4f4;border-right:2px solid #8c8c8c;border-bottom:1.7px solid #8c8c8c;box-sizing:border-box;"></div>
<div class="t" style="left:422.20px;width:300px;text-align:center;top:693.57px;font-size:20px;line-height:20px;color:#eeeeee;">Measure</div>
<div style="position:absolute;left:656.2px;top:677.3px;width:156px;height:51.2px;background:#40474c;border-left:3px solid #f4f4f4;border-top:2.7px solid #f4f4f4;border-right:2px solid #8c8c8c;border-bottom:1.7px solid #8c8c8c;box-sizing:border-box;"></div>
<div class="t" style="left:584.20px;width:300px;text-align:center;top:693.57px;font-size:20px;line-height:20px;color:#eeeeee;">Save/Recall</div>
<div style="position:absolute;left:818.2px;top:677.3px;width:156px;height:51.2px;background:#40474c;border-left:3px solid #f4f4f4;border-top:2.7px solid #f4f4f4;border-right:2px solid #8c8c8c;border-bottom:1.7px solid #8c8c8c;box-sizing:border-box;"></div>
<div class="t" style="left:746.20px;width:300px;text-align:center;top:693.57px;font-size:20px;line-height:20px;color:#eeeeee;">System</div>
</body></html>
